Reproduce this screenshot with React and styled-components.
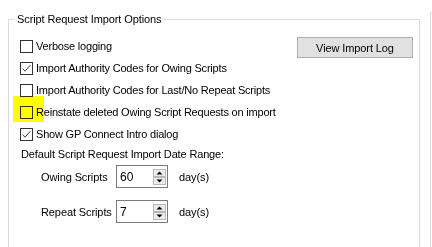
import React from 'react'
import styled, { createGlobalStyle } from 'styled-components'

const GlobalStyle = createGlobalStyle`
  html, body {
    margin: 0;
    padding: 0;
    background: #ffffff;
    overflow: hidden;
  }
  body {
    font-family: "Liberation Sans", Arial, sans-serif;
    font-size: 11px;
    color: #000000;
  }
`

const Page = styled.div`
  display: flex;
  gap: 10px;
  padding: 12px 0 0 8px;
  width: 432px;
  height: 247px;
  box-sizing: border-box;
  overflow: hidden;
`

const GroupBox = styled.fieldset`
  flex: ${ p => p.$width ? `0 0 ${ p.$width }px` : '1 1 auto' };
  min-width: 0;
  box-sizing: border-box;
  margin: 0;
  padding: 9px 6px 0 11px;
  border: 1px solid #dcdcdc;
  border-bottom: 0;
  ${ p => !p.$width && 'border-right: 0;' }
  height: 100%;
`

const Legend = styled.legend`
  margin-left: -6px;
  padding: 0 3px;
  line-height: 14px;
  letter-spacing: -0.1px;
`

const TopSection = styled.div`
  display: flex;
  justify-content: space-between;
  align-items: flex-start;
`

const Options = styled.div`
  display: flex;
  flex-direction: column;
`

const CheckRow = styled.label`
  position: relative;
  display: flex;
  align-items: center;
  gap: 3px;
  height: 22px;
  white-space: nowrap;
  letter-spacing: -0.2px;
`

const Box = styled.span`
  flex: 0 0 auto;
  width: 13px;
  height: 13px;
  box-sizing: border-box;
  border: 1px solid #333333;
  background: #ffffff;
  display: flex;
  align-items: center;
  justify-content: center;
`

const Highlight = styled.span`
  position: absolute;
  left: -7px;
  top: -5px;
  width: 31px;
  height: 26px;
  background: #ffff00;
  mix-blend-mode: multiply;
  pointer-events: none;
`

const Button = styled.button`
  margin-top: 2px;
  width: 116px;
  height: 21px;
  box-sizing: border-box;
  background: #e1e1e1;
  border: 1px solid #adadad;
  border-radius: 0;
  font: inherit;
  letter-spacing: -0.1px;
  color: #000000;
  padding: 0;
`

const RangeTitle = styled.div`
  margin: 0 0 0 1px;
  height: 18px;
  display: flex;
  align-items: center;
  letter-spacing: -0.15px;
`

const RangeGrid = styled.div`
  display: grid;
  grid-template-columns: 75px auto auto;
  grid-auto-rows: 23px;
  row-gap: 12px;
  column-gap: 11px;
  align-items: center;
  padding: 2px 0 0 21px;
  justify-content: start;
`

const Label = styled.span`
  letter-spacing: -0.1px;
`

const Spinner = styled.div`
  display: flex;
  align-items: center;
  width: 52px;
  height: 23px;
  box-sizing: border-box;
  border: 1px solid #7a7a7a;
  background: #ffffff;
  margin-left: -11px;
`

const SpinValue = styled.span`
  flex: 1;
  padding-left: 3px;
  font-size: 12px;
`

const SpinColumn = styled.div`
  display: flex;
  flex-direction: column;
  margin-right: 1px;
`

const SpinButton = styled.span`
  width: 13px;
  height: 8px;
  box-sizing: border-box;
  border: 1px solid #b9b9b9;
  background: #ececec;
  display: flex;
  align-items: center;
  justify-content: center;
`

const Unit = styled.span`
  letter-spacing: -0.1px;
`

const Check = () => (
  <svg width="11" height="11" viewBox="0 0 11 11">
    <polyline points="1.5,5.5 4,8.2 9.5,2" fill="none" stroke="#444" strokeWidth="1" />
  </svg>
)

const Arrow = ({ up }) => (
  <svg width="7" height="4" viewBox="0 0 7 4">
    <polygon points={ up ? '0.5,3.5 3.5,0.5 6.5,3.5' : '0.5,0.5 3.5,3.5 6.5,0.5' } fill="#000" />
  </svg>
)

const CheckBox = ({ checked, highlight, children }) => (
  <CheckRow>
    <Box>{ checked && <Check /> }</Box>
    { children }
    { highlight && <Highlight /> }
  </CheckRow>
)

const NumberField = ({ value }) => (
  <Spinner>
    <SpinValue>{ value }</SpinValue>
    <SpinColumn>
      <SpinButton><Arrow up /></SpinButton>
      <SpinButton><Arrow /></SpinButton>
    </SpinColumn>
  </Spinner>
)

const options = [
  { text: 'Verbose logging', checked: false },
  { text: 'Import Authority Codes for Owing Scripts', checked: true },
  { text: 'Import Authority Codes for Last/No Repeat Scripts', checked: false },
  { text: 'Reinstate deleted Owing Script Requests on import', checked: false, highlight: true },
  { text: 'Show GP Connect Intro dialog', checked: true },
]

export default function App() {
  return (
    <>
      <GlobalStyle />
      <Page>
        <GroupBox $width={ 412 }>
          <Legend>Script Request Import Options</Legend>
          <TopSection>
            <Options>
              { options.map(o => (
                <CheckBox key={ o.text } checked={ o.checked } highlight={ o.highlight }>{ o.text }</CheckBox>
              )) }
            </Options>
            <Button>View Import Log</Button>
          </TopSection>
          <RangeTitle>Default Script Request Import Date Range:</RangeTitle>
          <RangeGrid>
            <Label>Owing Scripts</Label>
            <NumberField value="60" />
            <Unit>day(s)</Unit>
            <Label>Repeat Scripts</Label>
            <NumberField value="7" />
            <Unit>day(s)</Unit>
          </RangeGrid>
        </GroupBox>
        <GroupBox />
      </Page>
    </>
  )
}
